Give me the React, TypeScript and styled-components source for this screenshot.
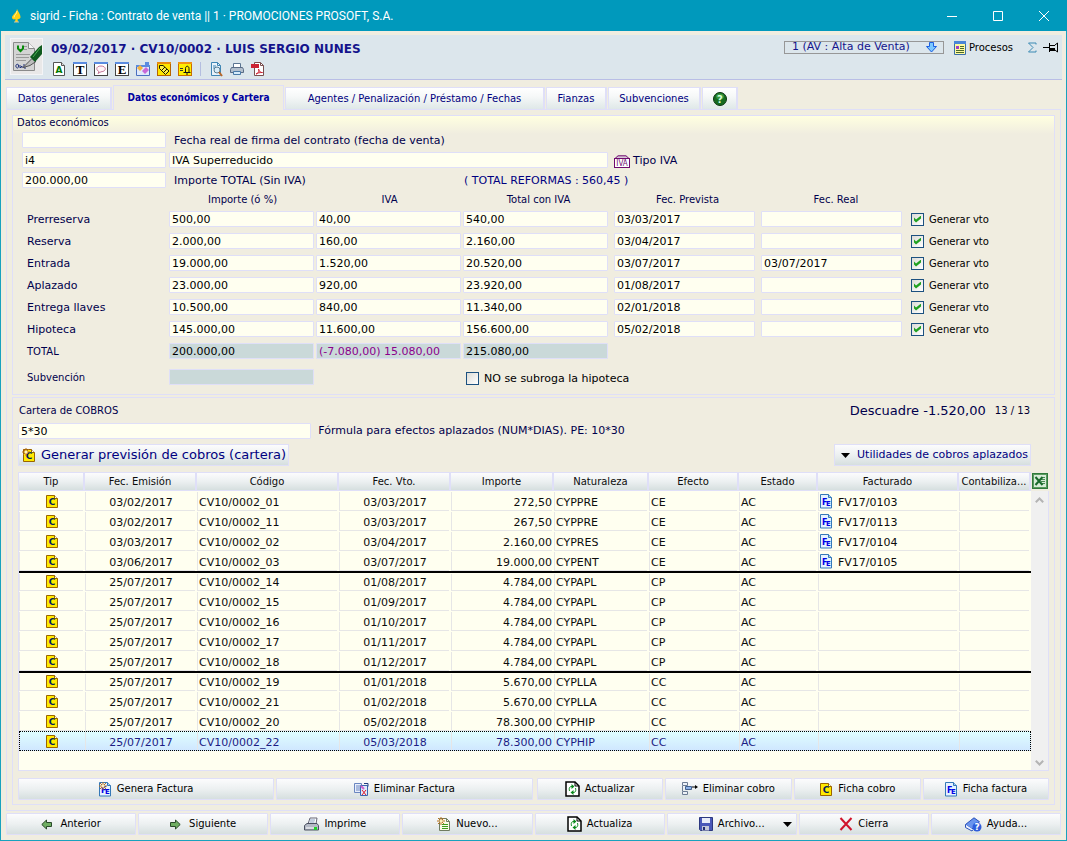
import React from "react";
import styled, { createGlobalStyle, css } from "styled-components";

const line = "#dfdff8";
const cream = "#f0ede0";
const paper = "#fffff0";
const navy = "#00004c";
const blue = "#000080";
const face = "linear-gradient(#fcfcfd, #ecf0f1 50%, #d6dfdf)";

const GlobalStyle = createGlobalStyle`
  * { box-sizing: border-box; }
  body { margin: 0; font: 11px/14px Verdana, "DejaVu Sans", sans-serif; color: ${navy}; }
  button, input, select { font: inherit; color: inherit; margin: 0; }
  svg { display: block; flex: none; }
`;

/* ---------- window frame ---------- */

const Window = styled.div`
  min-height: 100vh;
  display: flex;
  flex-direction: column;
  background: ${cream};
  border: 1px solid #18a2be;
  border-top: 0;
`;

const TitleBar = styled.div`
  height: 31px;
  flex: none;
  display: flex;
  align-items: center;
  background: #0099bc;
  color: #fff;
  font: 12px/16px "Segoe UI", Roboto, sans-serif;
  padding-left: 8px;
  margin: 0 -1px;
`;

const WindowTitle = styled.h1`
  flex: 1;
  margin: 0 0 0 6px;
  font: inherit;
`;

const CaptionButton = styled.button`
  width: 46px;
  height: 30px;
  padding: 0;
  border: 0;
  background: none;
  color: #fff;
  display: flex;
  align-items: center;
  justify-content: center;
`;

const Header = styled.header`
  display: flex;
  height: 45px;
  margin: 4px 4px 0;
  padding: 3px 3px 0 5px;
  background: #dce6ec;
  border-bottom: 1px solid #b9bee6;
`;

const DocumentBadge = styled.div`
  width: 33px;
  height: 37px;
  background: #e9e8e8;
  border: 1px solid #f4f4f6;
`;

const Heading = styled.div`
  flex: 1;
  padding: 4px 0 0 8px;
`;

const RecordTitle = styled.h2`
  margin: 0;
  font: bold 12px/14px Verdana, "DejaVu Sans", sans-serif;
  color: #14148c;
`;

const Toolbar = styled.div`
  display: flex;
  align-items: center;
  gap: 5px;
  height: 16px;
  margin-top: 5px;
`;

const ToolButton = styled.button`
  width: 16px;
  height: 16px;
  padding: 0;
  border: 0;
  background: none;
`;

const Divider = styled.span`
  width: 1px;
  height: 14px;
  margin: 0 2px;
  background: #b4bee0;
`;

const HeaderTools = styled.div`
  display: flex;
  align-items: center;
  height: 18px;
`;

const StateBox = styled.label`
  display: flex;
  align-items: center;
  width: 160px;
  height: 13px;
  padding: 0 6px 0 7px;
  border: 1px solid #979797;
  color: #14148c;
`;

const StateSelect = styled.select`
  appearance: none;
  flex: 1;
  min-width: 0;
  height: 12px;
  padding: 0;
  border: 0;
  background: none;
  line-height: 12px;
`;

const FlatButton = styled.button`
  display: flex;
  align-items: center;
  gap: 3px;
  margin: 2px 14px 0 10px;
  padding: 0;
  border: 0;
  background: none;
  color: #000;
  font-size: 10px;
`;

/* ---------- tabs ---------- */

const TabStrip = styled.div`
  display: flex;
  align-items: flex-end;
  gap: 1px;
  height: 24px;
  margin: 5px 5px 0;
`;

const Tab = styled.button<{ $w: number; $active?: boolean }>`
  width: ${(p) => p.$w}px;
  height: 22px;
  padding: 1px 0 0;
  display: flex;
  align-items: center;
  justify-content: center;
  white-space: nowrap;
  font-size: 10px;
  color: ${blue};
  background: linear-gradient(#fff, #f6f8f8 40%, #dfe8e8);
  border: 1px solid ${line};
  border-right-width: 2px;
  border-bottom: 0;
  ${(p) =>
    p.$active &&
    css`
      height: 25px;
      margin-bottom: -1px;
      z-index: 1;
      padding-bottom: 1px;
      background: ${cream};
      border-right-width: 1px;
      color: #0000a0;
      font: bold 10px/14px Tahoma, "DejaVu Sans Condensed", "DejaVu Sans", sans-serif;
    `}
`;

const TabPanel = styled.main`
  flex: 1;
  display: flex;
  flex-direction: column;
  gap: 2px;
  margin: 0 5px;
  padding: 5px;
  border: 1px solid ${line};
`;

/* ---------- economic data ---------- */

const Section = styled.section<{ $grow?: boolean }>`
  border: 1px solid ${line};
  ${(p) =>
    p.$grow
      ? css`
          flex: 1;
          display: flex;
          flex-direction: column;
          padding: 4px 5px 4px;
        `
      : css`
          padding-bottom: 2px;
          background: linear-gradient(#ffffe0, ${cream} 18px);
        `}
`;

const Caption = styled.h3`
  margin: 0;
  padding: 0 4px;
  font: 10px/14px Verdana, "DejaVu Sans", sans-serif;
`;

const TopRow = styled.div`
  display: grid;
  grid-template-columns: 147fr 295fr 150fr 440fr;
  align-items: center;
  height: 20px;
  padding-left: 9px;
`;

const GridRow = styled.div<{ $h?: number }>`
  display: grid;
  grid-template-columns: 142fr 147fr 147fr 151fr 147fr 150fr 143fr;
  align-items: center;
  height: ${(p) => p.$h ?? 22}px;
  padding-left: 14px;
`;

const Cell = styled.div<{ $gap?: number; $span?: number }>`
  grid-column: span ${(p) => p.$span ?? 1};
  padding-right: ${(p) => p.$gap ?? 2}px;
  min-width: 0;
`;

const Field = styled.input<{ $locked?: boolean; $accent?: boolean }>`
  display: block;
  width: 100%;
  height: 16px;
  padding: 0 2px;
  border: 1px solid ${line};
  border-radius: 1px;
  background: ${(p) => (p.$locked ? "#cad9d9" : paper)};
  color: ${(p) => (p.$accent ? "#8b008b" : "#000")};
`;

const ColumnLabel = styled.div`
  padding-top: 2px;
  text-align: center;
  font-size: 10px;
`;

const Note = styled.div<{ $span?: number; $pad?: number }>`
  grid-column: span ${(p) => p.$span ?? 1};
  padding: 2px 0 0 ${(p) => p.$pad ?? 0}px;
  display: flex;
  align-items: center;
  gap: 3px;
  white-space: nowrap;
`;

const RowLabel = styled.label<{ $small?: boolean }>`
  padding-top: 2px;
  font-size: ${(p) => (p.$small ? 10 : 11)}px;
`;

const CheckLabel = styled.label<{ $small?: boolean }>`
  display: flex;
  align-items: center;
  gap: 5px;
  padding-top: 2px;
  color: #000;
  white-space: nowrap;
  font-size: ${(p) => (p.$small ? 10 : 11)}px;
`;

const CheckBox = styled.input`
  appearance: none;
  display: flex;
  align-items: center;
  justify-content: center;
  width: 13px;
  height: 13px;
  border: 1px solid #1c5180;
  background: linear-gradient(135deg, #dcdcd7, #fff);
  && { margin-bottom: 2px; }
  &:checked::after {
    content: "";
    width: 7px;
    height: 7px;
    background: #21a121;
    clip-path: polygon(0 29%, 29% 57%, 100% 0, 100% 43%, 29% 100%, 0 71%);
  }
`;

/* ---------- receivables ---------- */

const Bar = styled.div<{ $h: number }>`
  display: flex;
  align-items: center;
  justify-content: space-between;
  height: ${(p) => p.$h}px;
`;

const Summary = styled.div`
  display: flex;
  align-items: center;
  gap: 9px;
  padding-right: 19px;
  font-size: 13px;
  small { font-size: 10px; color: #000030; }
`;

const FormulaRow = styled.label`
  display: grid;
  grid-template-columns: 293fr 730fr;
  gap: 7px;
  align-items: center;
  height: 24px;
`;

const RaisedButton = styled.button<{ $size?: number }>`
  display: flex;
  align-items: center;
  gap: ${(p) => (p.$size ? 5 : 7)}px;
  height: 22px;
  padding: 0 2px 0 ${(p) => (p.$size ? 3 : 6)}px;
  border: 1px solid ${line};
  background: ${face};
  color: ${blue};
  font-size: ${(p) => p.$size ?? 11}px;
`;

const TableArea = styled.div`
  flex: 1;
  display: flex;
  min-height: 281px;
  margin-top: 5px;
`;

const TableBox = styled.div`
  flex: 1;
  background: ${paper};
  border: solid ${line};
  border-width: 0 0 1px 1px;
`;

const Side = styled.div`
  width: 18px;
  display: flex;
  flex-direction: column;
`;

const ExcelButton = styled.button`
  width: 16px;
  height: 19px;
  margin-left: 1px;
  padding: 1px 0 2px;
  border: 0;
  background: none;
`;

const ScrollTrack = styled.div`
  flex: 1;
  display: flex;
  flex-direction: column;
  align-items: center;
  justify-content: space-between;
  padding: 6px 0 4px;
  background: #f0f0f0;
  border: solid ${line};
  border-width: 0 1px 1px 0;
`;

const DataTable = styled.table`
  width: 100%;
  table-layout: fixed;
  border-spacing: 0;
  color: #0c0c0c;
`;

const Th = styled.th`
  height: 19px;
  padding: 0;
  overflow: hidden;
  white-space: nowrap;
  font-weight: normal;
  font-size: 10px;
  background: ${face};
  border-top: 1px solid ${line};
  border-right: 2px solid ${line};
  border-bottom: 1px solid ${line};
`;

const Td = styled.td<{ $align?: string }>`
  height: 20px;
  padding: 4px 2px 0;
  line-height: 14px;
  white-space: nowrap;
  text-align: ${(p) => p.$align ?? "left"};
  background: linear-gradient(#e6e6e6, #e6e6e6) 0 1px / 1px 18px no-repeat,
    linear-gradient(#e6e6e6, #e6e6e6) 0 100% / calc(100% - 2px) 1px no-repeat;
`;

const Tr = styled.tr<{ $split?: boolean; $selected?: boolean }>`
  ${(p) =>
    p.$split &&
    css`
      ${Td} { border-top: 2px solid #000; padding-top: 2px; }
    `}
  ${(p) =>
    p.$selected &&
    css`
      color: #1c1c84;
      background: linear-gradient(#e0ffff, #cfe6ff);
      outline: 1px dotted #000;
      outline-offset: -1px;
      ${Td} { background: linear-gradient(#e6e6e6, #e6e6e6) 0 1px / 1px 18px no-repeat; }
    `}
`;

const CellContent = styled.span<{ $center?: boolean }>`
  display: flex;
  align-items: center;
  height: 14px;
  gap: 5px;
  justify-content: ${(p) => (p.$center ? "center" : "flex-start")};
  svg { margin-bottom: 4px; }
`;

/* ---------- button bars ---------- */

const Actions = styled.div`
  display: grid;
  grid-template-columns: 256fr 256fr 128fr 127fr 127fr 126fr;
  gap: 2px;
  margin: 7px 0 0;
`;

const ActionButton = styled.button<{ $lead?: boolean; $gap?: number }>`
  position: relative;
  display: flex;
  align-items: center;
  justify-content: center;
  gap: ${(p) => p.$gap ?? 5}px;
  height: 22px;
  padding: 0;
  margin-left: ${(p) => (p.$lead ? 2 : 0)}px;
  border: 1px solid ${line};
  border-radius: 1px;
  background: ${face};
  color: #000;
  font-size: 10px;
  line-height: 16px;
`;

const BottomBar = styled.footer`
  display: grid;
  grid-template-columns: repeat(8, 1fr);
  gap: 2px;
  margin: 2px 5px 5px;
`;

const MenuArrow = styled.span`
  position: absolute;
  right: 4px;
`;

/* ---------- icons ---------- */

const Caret = () => (
  <svg width="9" height="5" viewBox="0 0 9 5"><path d="M0 0h9L4.500 5z" fill="#000" /></svg>
);

const Flame = () => (
  <svg width="16" height="16" viewBox="0 0 16 16">
    <path d="M9 1c1 3 3.500 5 3.500 8 0 1.500-1.500 2.500-3 2.200L10 14H7l.5-3C5.500 12 4 11 4 9.500 4 7 8.500 5 9 1z" fill="#ffcf10" />
    <path d="M9 3c0 3-3 4-3 6.500" stroke="#fff3a0" fill="none" />
    <path d="M6 13.500h5v1H6z" fill="#c9c2b0" />
  </svg>
);

const ContractIcon = () => (
  <svg width="31" height="35" viewBox="0 0 31 35">
    <path d="M2.500 3.500h15l6 6v22h-21z" fill="#d4d4d4" stroke="#8a8a8a" />
    <path d="M17.500 3.500v6h6" fill="#f5f5f5" stroke="#8a8a8a" />
    <path d="M13 7.500h3M13 10.500h3M5 15.500h14M5 18.500h13M5 21.500h10" stroke="#9a9a9a" />
    <path d="M7 6.500v3L9.500 12 12 9.500v-3" fill="none" stroke="#0a8a0a" strokeWidth="2" />
    <path d="M5 28c-1-3 3-4 2.500-1 0 3-2 2-2.500 1zM9 26v3l2-2v2M13 25v4h2" fill="none" stroke="#20307a" />
    <path d="M12 28.500l9-9 4 3-6 4z" fill="#bdbdbd" stroke="#555" />
    <path d="M19 18L28 8l3-2v9l-7 8z" fill="#0f5a1e" />
    <path d="M22 18l7-9" stroke="#4cae55" />
  </svg>
);

const LetterPage = () => (
  <svg width="16" height="16" viewBox="0 0 16 16">
    <path d="M2.500 1.500h8l3 3v10h-11z" fill="#fff" stroke="#555" />
    <path d="M10.500 1.500v3h3" fill="#ddd" stroke="#555" />
    <text x="8" y="12" textAnchor="middle" fontFamily="DejaVu Sans" fontWeight="bold" fontSize="9" fill="#007a00">A</text>
  </svg>
);

const FrameIcon = ({ children, fill = "#fff", edge = "#444", cap = "#5a8be0" }: { children?: React.ReactNode; fill?: string; edge?: string; cap?: string }) => (
  <svg width="16" height="16" viewBox="0 0 16 16">
    <rect x="1.500" y="1.500" width="13" height="13" fill={fill} stroke={edge} />
    <rect x="1" y="1" width="14" height="2" fill={cap} />
    {children}
  </svg>
);

const SerifLetter = ({ ch }: { ch: string }) => (
  <text x="8" y="13" textAnchor="middle" fontFamily="Liberation Serif" fontWeight="bold" fontSize="13" fill="#000">{ch}</text>
);

const Bubble = () => (
  <FrameIcon>
    <path d="M5 12.500l1-2C3 9.500 2.500 5 8 5s6 5.500 0 5.800z" fill="#fff5f8" stroke="#c77a9a" />
  </FrameIcon>
);

const CardIcon = () => (
  <svg width="16" height="16" viewBox="0 0 16 16">
    <path d="M1.500 4.500h13v10h-13z" fill="#dfe9fb" stroke="#4a6fc0" />
    <path d="M1 4h14v2H1zM10 1h4v3h-4z" fill="#5a8be0" />
    <path d="M5 4l3 3-3 3-3-3z" fill="#f5b23c" />
    <path d="M11 6l3 3-4 4-3-3z" fill="#c868d8" />
  </svg>
);

const TagIcon = () => (
  <FrameIcon fill="#ffe600" edge="#b86400" cap="#e88c10">
    <path d="M3.500 4.500H7l6 5.500-3.500 3.500-6-6z" fill="#fff04a" stroke="#1a1a00" />
    <path d="M6 9l3-3M8 11l3-3" stroke="#1a1a00" />
  </FrameIcon>
);

const BellIcon = () => (
  <FrameIcon fill="#ffee00" edge="#c86e00" cap="#f09414">
    <path d="M3 7.500h3M3 9.500h3" stroke="#333" />
    <path d="M6.500 11.500h7M8.500 11V7.500c0-3 3.500-3 3.500 0V11M9 13h2" fill="none" stroke="#111" />
  </FrameIcon>
);

const PreviewIcon = () => (
  <svg width="16" height="16" viewBox="0 0 16 16">
    <path d="M3.500 1.500h6l3 3v10h-9z" fill="#e9f3fb" stroke="#3f86b5" />
    <path d="M9.500 1.500v3h3M5 5h3M5 7h2" fill="none" stroke="#3f86b5" />
    <circle cx="9" cy="9" r="3" fill="#d8ecf8" stroke="#5a7f96" />
    <path d="M11 11l3 4" stroke="#b8682a" strokeWidth="2" />
  </svg>
);

const SmallPrinter = () => (
  <svg width="16" height="16" viewBox="0 0 16 16">
    <path d="M4.500 7V2.500h7V7" fill="#fff" stroke="#5c7592" />
    <path d="M2.500 6.500h11l1 2v3h-13v-3z" fill="#b4c0ce" stroke="#5a6c86" />
    <path d="M4.500 10.500h7v3h-7z" fill="#d6ebfa" stroke="#4a7aa8" />
  </svg>
);

const PdfIcon = () => (
  <svg width="16" height="16" viewBox="0 0 16 16">
    <path d="M4.500 1.500h6l3 3v10h-9z" fill="#fff" stroke="#7a5050" />
    <path d="M10.500 1.500v3h3" fill="none" stroke="#7a5050" />
    <path d="M1 3h8v4H1z" fill="#cc2233" />
    <path d="M6 13c3-1 3-3 2.500-5 1 3 2 3.500 4 3.500-3 0-5 .5-6.500 1.500z" fill="none" stroke="#cc2233" />
  </svg>
);

const DownArrow = () => (
  <svg width="11" height="11" viewBox="0 0 11 11">
    <path d="M3.500.5h4v4h3l-5 5.500-5-5.500h3z" fill="#7cc8ff" stroke="#1c5ee0" />
  </svg>
);

const ProcessIcon = () => (
  <svg width="12" height="14" viewBox="0 0 12 14">
    <path d="M.5.500h11v13H.5z" fill="#fffaa0" stroke="#3a6ea8" />
    <path d="M0 0h12v3H0z" fill="#4a86d8" />
    <path d="M2 5h3v3H2z" fill="#a03cc8" />
    <path d="M6 5.500h4M6 7.500h4M2 9.500h8M2 11.500h8" stroke="#4b6a2c" />
  </svg>
);

const PinIcon = () => (
  <svg width="16" height="11" viewBox="0 0 16 11">
    <path d="M0 5.500h6M6.500 1v9M7 3.500h5M7 8.500h5M12 3l2.500-2v9L12 8" fill="none" stroke="#000" />
    <path d="M7 6h5v3H7z" fill="#000" />
  </svg>
);

const HelpBall = () => (
  <svg width="14" height="14" viewBox="0 0 14 14">
    <circle cx="7" cy="7" r="6.500" fill="#176b20" stroke="#0a3510" />
    <ellipse cx="7" cy="4.500" rx="4" ry="3" fill="#36963e" />
    <text x="7" y="11" textAnchor="middle" fontFamily="DejaVu Sans" fontWeight="bold" fontSize="10" fill="#d8ffd8">?</text>
  </svg>
);

const IvaIcon = () => (
  <svg width="16" height="13" viewBox="0 0 16 13">
    <path d="M1 3.500L4 .8h8l3 2.700" fill="#d8c8d8" stroke="#6e0a6e" />
    <rect x=".5" y="3.500" width="15" height="9" fill="#fff" stroke="#6e0a6e" />
    <text x="8" y="11" textAnchor="middle" fontFamily="DejaVu Sans Condensed" fontSize="8" fill="#6e0a6e">IVA</text>
  </svg>
);

const Spark = () => (
  <g>
    <path d="M4 0v8M0 4h8M1 1l6 6M7 1L1 7" stroke="#b8701c" />
    <circle cx="4" cy="4" r="1.500" fill="#fff0c0" />
  </g>
);

const ChargeIcon = ({ fresh }: { fresh?: boolean }) => (
  <svg width="14" height="15" viewBox="-1 0 14 15">
    <path d="M.5 1.500h8l3 3v9H.5z" fill="#ffea00" stroke="#9a6400" />
    <path d="M8.500 1.500v3h3" fill="#fff" stroke="#9a6400" />
    <text x="6" y="11" textAnchor="middle" fontFamily="DejaVu Sans" fontWeight="bold" fontSize="9" fill="#00205a">C</text>
    {fresh && <g transform="translate(-1 0)"><Spark /></g>}
  </svg>
);

const InvoiceIcon = ({ fresh }: { fresh?: boolean }) => (
  <svg width="13" height="15" viewBox="0 0 13 15">
    <path d="M.5.500h8l3 3v10.500H.5z" fill="#e6f2ff" stroke="#3478b8" />
    <path d="M8.500.5v3h3" fill="#a8d0f0" stroke="#3478b8" />
    <text x="2" y="11" fontFamily="DejaVu Sans" fontWeight="bold" fontSize="8" fill="#0000e6">F</text>
    <text x="6" y="12" fontFamily="DejaVu Sans" fontWeight="bold" fontSize="7" fill="#0000e6">E</text>
    {fresh && <Spark />}
  </svg>
);

const RemoveInvoiceIcon = () => (
  <svg width="15" height="15" viewBox="0 0 15 15">
    <path d="M.5 1.500h7v9h-7zM2 4h4M2 6h4M2 8h4" fill="#e8eefc" stroke="#6a86c0" />
    <path d="M6.500 3.500h7v10h-7z" fill="#dfe9fb" stroke="#3a64b0" />
    <path d="M10 1.500h4v3" fill="none" stroke="#203c80" />
    <path d="M7 4l3 3" stroke="#d060c8" strokeWidth="2" />
    <path d="M8 8l4 5M12 8l-4 5" stroke="#e01c2c" />
  </svg>
);

const RefreshIcon = () => (
  <svg width="15" height="16" viewBox="0 0 15 16">
    <path d="M1 1h9l4 4v10H1z" fill="#fff" stroke="#000" strokeWidth="1.500" />
    <path d="M10 1v4h4" fill="none" stroke="#000" />
    <path d="M7 5.500c-3 0-3 2-2.500 4.500M8 11.500c3 0 3-2 2.500-4.500" fill="none" stroke="#0a8a1c" />
    <path d="M6.500 3l3 2.500-3 2.500zM8.500 9l-3 2.500 3 2.500z" fill="#0a8a1c" />
  </svg>
);

const RemoveRowIcon = () => (
  <svg width="16" height="14" viewBox="0 0 16 14">
    <path d="M.5.500h5v3h-5zM.5 9.500h5v3h-5zM.5 4v5" fill="#eef2f8" stroke="#6c7c94" />
    <path d="M3.500 4.500h6v3h-6z" fill="#8fb2e8" stroke="#42618f" />
    <path d="M10 5h4" stroke="#000" />
    <path d="M13 3l3 2-3 2z" fill="#000" />
  </svg>
);

const GreenArrow = ({ flip }: { flip?: boolean }) => (
  <svg width="11" height="11" viewBox="0 0 11 11">
    <path d="M.8 5.500L5.500 1v2.500h5v4h-5V10z" fill="#6fae62" stroke="#2a4a2a" transform={flip ? "translate(11 0) scale(-1 1)" : undefined} />
  </svg>
);

const PrinterIcon = () => (
  <svg width="15" height="15" viewBox="0 0 15 15">
    <path d="M4 7l2-6h7l-1 6z" fill="#fff" stroke="#667" />
    <path d="M6 3h5M5.500 5h5" stroke="#8aa0c0" />
    <path d="M.5 8.500L3 6.500h10l1.500 2v4.500H.5z" fill="#b4bac6" stroke="#4a5060" />
    <path d="M2 11h8" stroke="#fff" />
    <path d="M10 10h3v3h-3z" fill="#1fd22c" />
  </svg>
);

const NewIcon = () => (
  <svg width="14" height="15" viewBox="0 0 14 15">
    <path d="M2.500 1.500h7l3 3v9h-10z" fill="#f8fbe8" stroke="#707c60" />
    <path d="M9.500 1.500v3h3" fill="none" stroke="#707c60" />
    <path d="M5 7.500h6M5 9.500h6M5 11.500h6" stroke="#3c9c1c" />
    <Spark />
  </svg>
);

const DiskIcon = () => (
  <svg width="14" height="14" viewBox="0 0 14 14">
    <path d="M.5.500h13v13H1.500l-1-1z" fill="#4a58b8" stroke="#2c3880" />
    <path d="M3 1h8v5H3z" fill="#e8ecf8" />
    <path d="M3 9h7v4.500H3z" fill="#c4c8d8" />
    <path d="M4 10h2v3H4z" fill="#222c70" />
  </svg>
);

const CrossIcon = () => (
  <svg width="14" height="14" viewBox="0 0 14 14">
    <path d="M1.500 1l11 12M12.500 1l-11 12" stroke="#d0142c" strokeWidth="2" />
  </svg>
);

const BookIcon = () => (
  <svg width="17" height="15" viewBox="0 0 17 15">
    <path d="M.5 7.500L9 .8l5.500 4L7 12z" fill="#6a94ee" stroke="#2a50b8" />
    <path d="M.5 7.500v3L7 14l1-1.500" fill="#eef3ff" stroke="#2a50b8" />
    <circle cx="12" cy="10" r="4.500" fill="#2f5ddc" />
    <text x="12" y="13.300" textAnchor="middle" fontFamily="DejaVu Sans" fontWeight="bold" fontSize="9" fill="#fff">?</text>
  </svg>
);

const ExcelIcon = () => (
  <svg width="16" height="16" viewBox="0 0 16 16">
    <rect x=".5" y=".5" width="15" height="15" fill="#d8ecd8" stroke="#2f7a3a" />
    <rect x="1.500" y="1.500" width="13" height="13" fill="none" stroke="#5a9a5e" />
    <path d="M9 4.500h4M9 6.500h4M9 8.500h4M9 10.500h4" stroke="#4a8a52" />
    <path d="M3.500 4l7 8M10.500 4l-7 8" stroke="#1a6a2c" strokeWidth="2" />
  </svg>
);

const Chevron = ({ down }: { down?: boolean }) => (
  <svg width="9" height="6" viewBox="0 0 9 6">
    <path d={down ? "M.8.8l3.700 3.700L8.200.8" : "M.8 5.200l3.700-3.700 3.700 3.700"} fill="none" stroke="#b4b4b4" strokeWidth="2" />
  </svg>
);

/* ---------- data ---------- */

const phases = [
  ["Prerreserva", "500,00", "40,00", "540,00", "03/03/2017", ""],
  ["Reserva", "2.000,00", "160,00", "2.160,00", "03/04/2017", ""],
  ["Entrada", "19.000,00", "1.520,00", "20.520,00", "03/07/2017", "03/07/2017"],
  ["Aplazado", "23.000,00", "920,00", "23.920,00", "01/08/2017", ""],
  ["Entrega llaves", "10.500,00", "840,00", "11.340,00", "02/01/2018", ""],
  ["Hipoteca", "145.000,00", "11.600,00", "156.600,00", "05/02/2018", ""],
];

const columns: [string, number][] = [
  ["Tip", 66], ["Fec. Emisión", 112], ["Código", 142], ["Fec. Vto.", 112], ["Importe", 103],
  ["Naturaleza", 95], ["Efecto", 90], ["Estado", 79], ["Facturado", 141], ["Contabiliza...", 72],
];

const charges = [
  ["03/02/2017", "01", "03/03/2017", "272,50", "CYPPRE", "CE", "FV17/0103"],
  ["03/02/2017", "11", "03/03/2017", "267,50", "CYPPRE", "CE", "FV17/0113"],
  ["03/03/2017", "02", "03/04/2017", "2.160,00", "CYPRES", "CE", "FV17/0104"],
  ["03/06/2017", "03", "03/07/2017", "19.000,00", "CYPENT", "CE", "FV17/0105"],
  ["25/07/2017", "14", "01/08/2017", "4.784,00", "CYPAPL", "CP", ""],
  ["25/07/2017", "15", "01/09/2017", "4.784,00", "CYPAPL", "CP", ""],
  ["25/07/2017", "16", "01/10/2017", "4.784,00", "CYPAPL", "CP", ""],
  ["25/07/2017", "17", "01/11/2017", "4.784,00", "CYPAPL", "CP", ""],
  ["25/07/2017", "18", "01/12/2017", "4.784,00", "CYPAPL", "CP", ""],
  ["25/07/2017", "19", "01/01/2018", "5.670,00", "CYPLLA", "CC", ""],
  ["25/07/2017", "21", "01/02/2018", "5.670,00", "CYPLLA", "CC", ""],
  ["25/07/2017", "20", "05/02/2018", "78.300,00", "CYPHIP", "CC", ""],
  ["25/07/2017", "22", "05/03/2018", "78.300,00", "CYPHIP", "CC", ""],
];

const tools: [string, React.ReactNode][] = [
  ["Alfa", <LetterPage />],
  ["Texto", <FrameIcon><SerifLetter ch="T" /></FrameIcon>],
  ["Comentario", <Bubble />],
  ["Estado", <FrameIcon><SerifLetter ch="E" /></FrameIcon>],
  ["Tarjeta", <CardIcon />],
  ["Etiqueta", <TagIcon />],
  ["Aviso", <BellIcon />],
];

const outputs: [string, React.ReactNode][] = [
  ["Vista previa", <PreviewIcon />],
  ["Imprimir", <SmallPrinter />],
  ["PDF", <PdfIcon />],
];

const ReformNote = styled(Note)`
  color: ${blue};
`;

const ListCaption = styled(Caption)`
  padding: 0 1px;
`;

const MenuButton = styled(RaisedButton)`
  && { margin-right: 18px; }
`;

export default function App() {
  return (
    <Window>
      <GlobalStyle />
      <TitleBar>
        <Flame />
        <WindowTitle>sigrid - Ficha : Contrato de venta || 1 · PROMOCIONES PROSOFT, S.A.</WindowTitle>
        <CaptionButton aria-label="Minimizar">
          <svg width="10" height="10" viewBox="0 0 10 10"><path d="M0 5.500h10" stroke="#fff" /></svg>
        </CaptionButton>
        <CaptionButton aria-label="Maximizar">
          <svg width="10" height="10" viewBox="0 0 10 10"><path d="M.5.500h9v9h-9z" fill="none" stroke="#fff" /></svg>
        </CaptionButton>
        <CaptionButton aria-label="Cerrar">
          <svg width="10" height="10" viewBox="0 0 10 10"><path d="M0 0l10 10M10 0L0 10" stroke="#fff" /></svg>
        </CaptionButton>
      </TitleBar>

      <Header>
        <DocumentBadge><ContractIcon /></DocumentBadge>
        <Heading>
          <RecordTitle>09/02/2017 · CV10/0002 · LUIS SERGIO NUNES</RecordTitle>
          <Toolbar>
            {tools.map(([name, icon]) => <ToolButton key={name} aria-label={name}>{icon}</ToolButton>)}
            <Divider />
            {outputs.map(([name, icon]) => <ToolButton key={name} aria-label={name}>{icon}</ToolButton>)}
          </Toolbar>
        </Heading>
        <HeaderTools>
          <StateBox>
            <StateSelect aria-label="Estado del contrato"><option>1 (AV : Alta de Venta)</option></StateSelect>
            <DownArrow />
          </StateBox>
          <FlatButton><ProcessIcon />Procesos</FlatButton>
          <ToolButton aria-label="Sumatorio">
            <svg width="11" height="11" viewBox="0 0 11 11"><path d="M9 2.500V1H1.500L6 5.500 1.500 10H9V8.500" fill="none" stroke="#3a8ab4" /></svg>
          </ToolButton>
          <ToolButton aria-label="Fijar"><PinIcon /></ToolButton>
        </HeaderTools>
      </Header>

      <TabStrip role="tablist">
        <Tab role="tab" $w={106}>Datos generales</Tab>
        <Tab role="tab" aria-selected $active $w={171}>Datos económicos y Cartera</Tab>
        <Tab role="tab" $w={260}>Agentes / Penalización / Préstamo / Fechas</Tab>
        <Tab role="tab" $w={61}>Fianzas</Tab>
        <Tab role="tab" $w={93}>Subvenciones</Tab>
        <Tab role="tab" aria-label="Ayuda" $w={36}><HelpBall /></Tab>
      </TabStrip>

      <TabPanel>
        <Section>
          <Caption>Datos económicos</Caption>
          <TopRow>
            <Cell $gap={3}><Field id="signed" defaultValue="" /></Cell>
            <Note as="label" htmlFor="signed" $span={3} $pad={5}>Fecha real de firma del contrato (fecha de venta)</Note>
          </TopRow>
          <TopRow>
            <Cell $gap={3}><Field aria-label="Código de IVA" defaultValue="i4" /></Cell>
            <Cell $span={2} $gap={6}><Field id="vat" defaultValue="IVA Superreducido" /></Cell>
            <Note as="label" htmlFor="vat"><IvaIcon />Tipo IVA</Note>
          </TopRow>
          <TopRow>
            <Cell $gap={3}><Field id="net" defaultValue="200.000,00" /></Cell>
            <Note as="label" htmlFor="net" $pad={5}>Importe TOTAL (Sin IVA)</Note>
            <ReformNote $span={2}>( TOTAL REFORMAS : 560,45 )</ReformNote>
          </TopRow>
          <GridRow $h={18}>
            <span />
            <ColumnLabel>Importe (ó %)</ColumnLabel>
            <ColumnLabel>IVA</ColumnLabel>
            <ColumnLabel>Total con IVA</ColumnLabel>
            <ColumnLabel>Fec. Prevista</ColumnLabel>
            <ColumnLabel>Fec. Real</ColumnLabel>
          </GridRow>
          {phases.map(([name, amount, vat, total, planned, actual], i) => (
            <GridRow key={name}>
              <RowLabel htmlFor={`phase-${i}`}>{name}</RowLabel>
              <Cell><Field id={`phase-${i}`} defaultValue={amount} /></Cell>
              <Cell><Field aria-label={`${name} IVA`} defaultValue={vat} /></Cell>
              <Cell $gap={6}><Field aria-label={`${name} total`} defaultValue={total} /></Cell>
              <Cell $gap={6}><Field aria-label={`${name} prevista`} defaultValue={planned} /></Cell>
              <Cell $gap={9}><Field aria-label={`${name} real`} defaultValue={actual} /></Cell>
              <CheckLabel $small><CheckBox type="checkbox" defaultChecked />Generar vto</CheckLabel>
            </GridRow>
          ))}
          <GridRow>
            <RowLabel $small htmlFor="sum">TOTAL</RowLabel>
            <Cell><Field id="sum" readOnly $locked value="200.000,00" /></Cell>
            <Cell><Field aria-label="Total IVA" readOnly $locked $accent value="(-7.080,00) 15.080,00" /></Cell>
            <Cell $gap={6}><Field aria-label="Total con IVA" readOnly $locked value="215.080,00" /></Cell>
          </GridRow>
          <GridRow $h={30}>
            <RowLabel $small htmlFor="grant">Subvención</RowLabel>
            <Cell><Field id="grant" readOnly $locked value="" /></Cell>
            <span />
            <Cell $span={3}>
              <Note $pad={3}>
                <CheckLabel><CheckBox type="checkbox" />NO se subroga la hipoteca</CheckLabel>
              </Note>
            </Cell>
          </GridRow>
        </Section>

        <Section $grow>
          <Bar $h={17}>
            <ListCaption>Cartera de COBROS</ListCaption>
            <Summary>Descuadre -1.520,00 <small>13 / 13</small></Summary>
          </Bar>
          <FormulaRow>
            <Field defaultValue="5*30" />
            Fórmula para efectos aplazados (NUM*DIAS). PE: 10*30
          </FormulaRow>
          <Bar $h={24}>
            <RaisedButton $size={13}><ChargeIcon fresh />Generar previsión de cobros (cartera)</RaisedButton>
            <MenuButton><Caret />Utilidades de cobros aplazados</MenuButton>
          </Bar>

          <TableArea>
            <TableBox>
              <DataTable>
                <colgroup>
                  {columns.map(([name, w]) => <col key={name} style={{ width: `${(w / 1012) * 100}%` }} />)}
                </colgroup>
                <thead>
                  <tr>{columns.map(([name]) => <Th key={name}>{name}</Th>)}</tr>
                </thead>
                <tbody>
                  {charges.map(([issued, code, due, amount, kind, effect, invoice], i) => (
                    <Tr key={code} $split={i === 4 || i === 9} $selected={i === charges.length - 1}>
                      <Td><CellContent $center><ChargeIcon /></CellContent></Td>
                      <Td $align="center">{issued}</Td>
                      <Td>CV10/0002_{code}</Td>
                      <Td $align="center">{due}</Td>
                      <Td $align="right">{amount}</Td>
                      <Td>{kind}</Td>
                      <Td>{effect}</Td>
                      <Td>AC</Td>
                      <Td>{invoice && <CellContent><InvoiceIcon />{invoice}</CellContent>}</Td>
                      <Td />
                    </Tr>
                  ))}
                </tbody>
              </DataTable>
            </TableBox>
            <Side>
              <ExcelButton aria-label="Exportar a Excel"><ExcelIcon /></ExcelButton>
              <ScrollTrack><Chevron /><Chevron down /></ScrollTrack>
            </Side>
          </TableArea>

          <Actions>
            <ActionButton><InvoiceIcon fresh />Genera Factura</ActionButton>
            <ActionButton><RemoveInvoiceIcon />Eliminar Factura</ActionButton>
            <ActionButton $lead><RefreshIcon />Actualizar</ActionButton>
            <ActionButton><RemoveRowIcon />Eliminar cobro</ActionButton>
            <ActionButton><ChargeIcon />Ficha cobro</ActionButton>
            <ActionButton><InvoiceIcon />Ficha factura</ActionButton>
          </Actions>
        </Section>
      </TabPanel>

      <BottomBar>
        <ActionButton $gap={8}><GreenArrow />Anterior</ActionButton>
        <ActionButton $gap={8}><GreenArrow flip />Siguiente</ActionButton>
        <ActionButton><PrinterIcon />Imprime</ActionButton>
        <ActionButton><NewIcon />Nuevo...</ActionButton>
        <ActionButton><RefreshIcon />Actualiza</ActionButton>
        <ActionButton><DiskIcon />Archivo...<MenuArrow><Caret /></MenuArrow></ActionButton>
        <ActionButton><CrossIcon />Cierra</ActionButton>
        <ActionButton><BookIcon />Ayuda...</ActionButton>
      </BottomBar>
    </Window>
  );
}
